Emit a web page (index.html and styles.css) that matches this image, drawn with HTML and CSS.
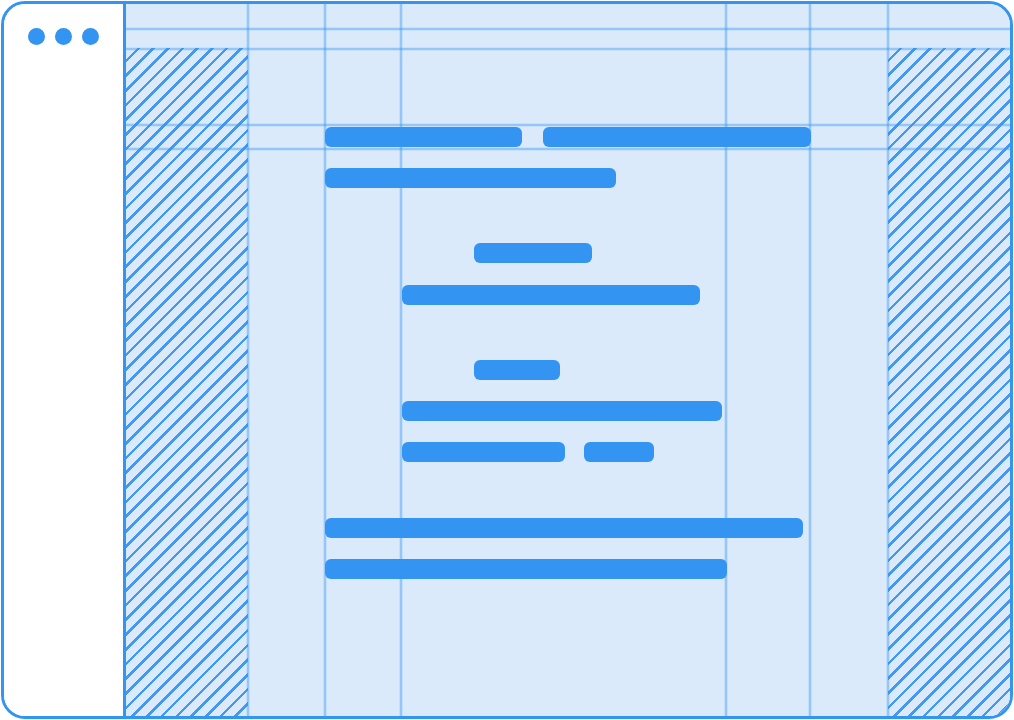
FILE: index.html
```html
<!DOCTYPE html>
<html>
<head>
    <link rel="stylesheet" href="styles.css">
</head>
<body>
    <div class="window">
        <aside class="sidebar">
            <div class="dots">
                <span></span>
                <span></span>
                <span></span>
            </div>
        </aside>

        <main class="canvas">
            <div class="top"></div>
            <div class="hatch"></div>

            <div class="content">
                <div class="row">
                    <div class="bar" style="width: 197px"></div>
                    <div class="bar" style="width: 268px"></div>
                </div>
                <div class="row">
                    <div class="bar" style="width: 291px"></div>
                </div>

                <div class="row group label">
                    <div class="bar" style="width: 118px"></div>
                </div>
                <div class="row field spaced">
                    <div class="bar" style="width: 298px"></div>
                </div>

                <div class="row group label">
                    <div class="bar" style="width: 86px"></div>
                </div>
                <div class="row field">
                    <div class="bar" style="width: 320px"></div>
                </div>
                <div class="row field tight">
                    <div class="bar" style="width: 163px"></div>
                    <div class="bar" style="width: 70px"></div>
                </div>

                <div class="row group wide">
                    <div class="bar" style="width: 478px"></div>
                </div>
                <div class="row">
                    <div class="bar" style="width: 402px"></div>
                </div>
            </div>

            <div class="hatch"></div>

            <!-- guide lines drawn over the canvas -->
            <svg class="guides" width="884" height="712" viewBox="0 0 884 712">
                <line x1="0" y1="25" x2="884" y2="25"></line>
                <line x1="0" y1="45" x2="884" y2="45"></line>
                <line x1="0" y1="121" x2="884" y2="121"></line>
                <line x1="0" y1="145" x2="884" y2="145"></line>
                <line x1="122" y1="0" x2="122" y2="712"></line>
                <line x1="199" y1="0" x2="199" y2="712"></line>
                <line x1="275" y1="0" x2="275" y2="712"></line>
                <line x1="600" y1="0" x2="600" y2="712"></line>
                <line x1="684" y1="0" x2="684" y2="712"></line>
                <line x1="762" y1="0" x2="762" y2="712"></line>
            </svg>
        </main>
    </div>
</body>
</html>
```

FILE: styles.css
```css
* {
    margin: 0;
    padding: 0;
    box-sizing: border-box;
}

body {
    font-family: 'Liberation Sans', Arial, sans-serif;
    background: #ffffff;
    width: 1014px;
    height: 720px;
    overflow: hidden;
}

.window {
    margin: 1px;
    width: 1012px;
    height: 718px;
    border: 3px solid #3394f2;
    border-radius: 24px;
    overflow: hidden;
    display: flex;
}

.sidebar {
    width: 122px;
    flex-shrink: 0;
    background: #ffffff;
    border-right: 3px solid #3394f2;
}

.dots {
    display: flex;
    gap: 10px;
    padding: 24px 0 0 24px;
}

.dots span {
    width: 17px;
    height: 17px;
    border-radius: 50%;
    background: #3394f2;
}

.canvas {
    flex: 1;
    position: relative;
    background: #dbeafb;
    display: grid;
    grid-template-columns: 122px 1fr 122px;
    grid-template-rows: 44px 1fr;
}

.top {
    grid-column: 1 / -1;
}

.hatch {
    background: repeating-linear-gradient(135deg,
        #dbeafb 0,
        #dbeafb 7.8px,
        #4299f1 7.8px,
        #4299f1 10.4px);
}

.guides {
    position: absolute;
    top: 0;
    left: 0;
    z-index: 1;
    pointer-events: none;
}

.guides line {
    stroke: rgba(51, 148, 242, 0.42);
    stroke-width: 2.6;
}

.content {
    position: relative;
    z-index: 2;
    padding: 79px 0 0 77px;
    display: flex;
    flex-direction: column;
}

.row {
    display: flex;
    gap: 21px;
    margin-top: 21px;
}

.row:first-child {
    margin-top: 0;
}

.row.group {
    margin-top: 55px;
}

.row.wide {
    margin-top: 56px;
}

.row.spaced {
    margin-top: 22px;
}

.row.label {
    padding-left: 149px;
}

.row.field {
    padding-left: 77px;
}

.row.tight {
    gap: 19px;
}

.bar {
    height: 20px;
    border-radius: 6px;
    background: #3394f2;
}
```
